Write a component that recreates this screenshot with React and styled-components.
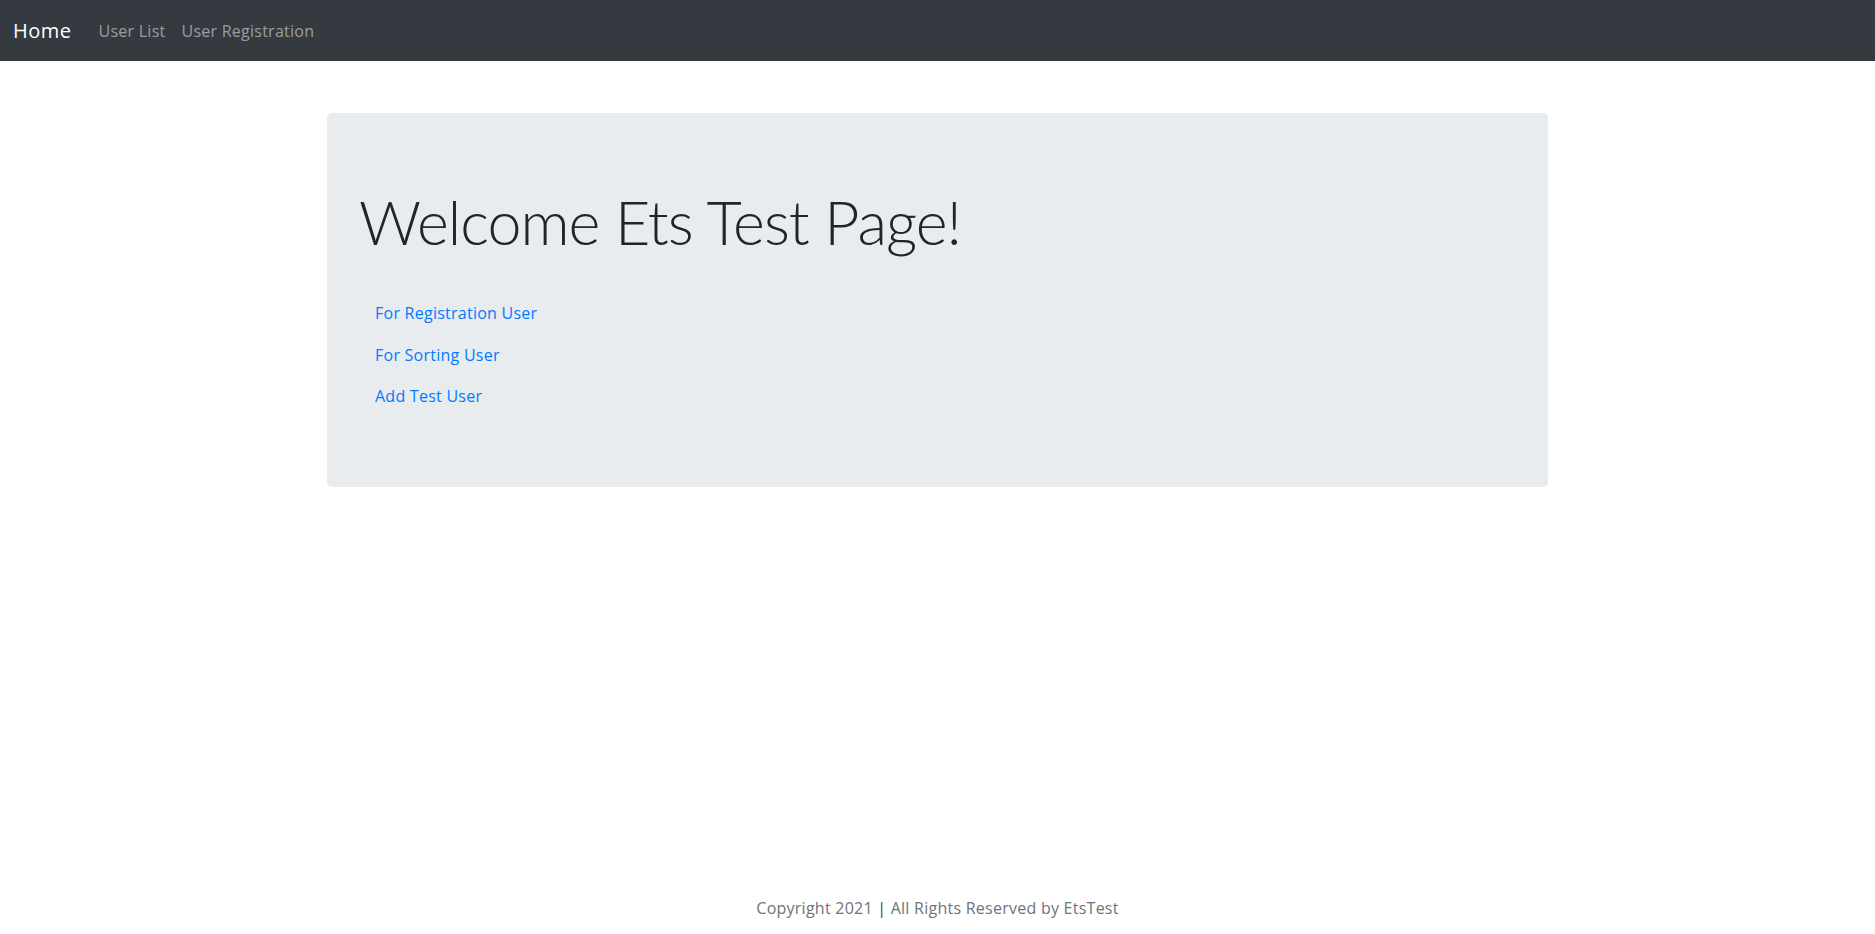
import React from "react";
import styled, { createGlobalStyle } from "styled-components";

const GlobalStyle = createGlobalStyle`
  html, body {
    margin: 0;
    padding: 0;
  }
  body {
    font-family: "Open Sans", "Noto Sans", "Liberation Sans", sans-serif;
    font-size: 16px;
    color: #212529;
    background: #fff;
  }
  * {
    box-sizing: border-box;
  }
`;

const Page = styled.div`
  min-height: 100vh;
  display: flex;
  flex-direction: column;
`;

const Navbar = styled.nav`
  height: 61px;
  background: #343a40;
  display: flex;
  align-items: center;
  padding: 0 13px;
`;

const Brand = styled.a`
  font-size: 20px;
  line-height: 30px;
  letter-spacing: 0.5px;
  color: #fff;
  text-decoration: none;
  margin-right: 19px;
  cursor: pointer;
`;

const NavLink = styled.a`
  font-size: 16px;
  line-height: 24px;
  letter-spacing: 0.25px;
  padding: 0 8px;
  color: rgba(255, 255, 255, 0.5);
  text-decoration: none;
  cursor: pointer;
`;

const Container = styled.main`
  width: 1221px;
  margin: 52px auto 0;
`;

const Jumbotron = styled.section`
  background: #e9ecef;
  border-radius: 5px;
  padding: 64px 32px;
`;

const Heading = styled.h1`
  font-family: Lato, "Open Sans", sans-serif;
  font-size: 61px;
  font-weight: 300;
  letter-spacing: -1px;
  line-height: 90.8px;
  margin: 0 0 25.6px;
  color: #212529;
`;

const LinkList = styled.div`
  display: flex;
  flex-direction: column;
  align-items: flex-start;
  margin-bottom: 5px;
`;

const Link = styled.a`
  display: block;
  padding: 8px 16px;
  line-height: 25.5px;
  font-size: 16px;
  letter-spacing: 0.25px;
  color: #007bff;
  text-decoration: none;
  cursor: pointer;
`;

const Footer = styled.footer`
  margin-top: auto;
  padding-bottom: 14px;
  text-align: center;
  font-size: 16px;
  line-height: 24px;
  letter-spacing: 0.25px;
  color: #6c757d;
`;

const Divider = styled.span`
  color: #3d4a5c;
`;

export default function App() {
  const links = ["For Registration User", "For Sorting User", "Add Test User"];

  return (
    <Page>
      <GlobalStyle />
      <Navbar>
        <Brand>Home</Brand>
        <NavLink>User List</NavLink>
        <NavLink>User Registration</NavLink>
      </Navbar>
      <Container>
        <Jumbotron>
          <Heading>Welcome Ets Test Page!</Heading>
          <LinkList>
            {links.map((l) => (
              <Link key={l}>{l}</Link>
            ))}
          </LinkList>
        </Jumbotron>
      </Container>
      <Footer>
        Copyright 2021 <Divider>|</Divider> All Rights Reserved by EtsTest
      </Footer>
    </Page>
  );
}
